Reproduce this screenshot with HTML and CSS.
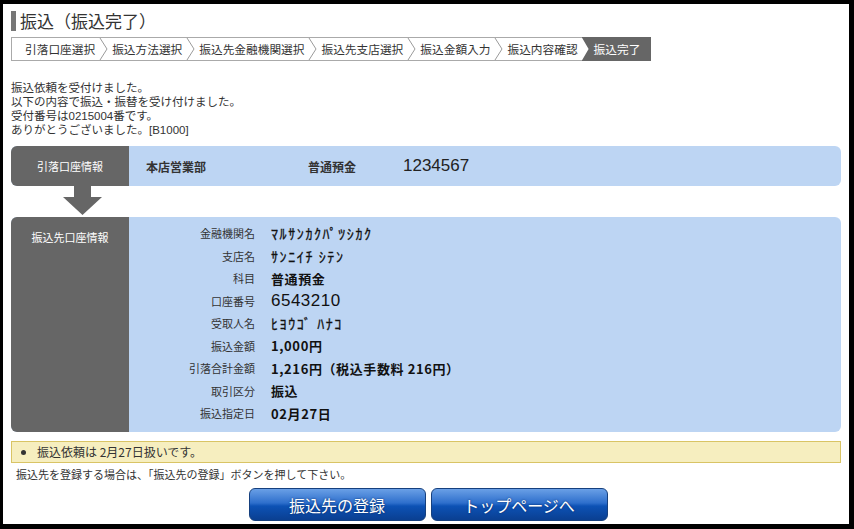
FILE: index.html
```html
<!DOCTYPE html>
<html lang="ja">
<head>
    <meta charset="UTF-8">
    <title>振込（振込完了）</title>
    <link rel="stylesheet" href="styles.css">
</head>
<body>
    <div class="page">
        <h1 class="page-title">振込（振込完了）</h1>

        <div class="crumbs">
            <span class="crumb first">引落口座選択</span>
            <svg class="chev" width="9" height="22" viewBox="0 0 9 22"><polyline points="1,0 8,11 1,22" fill="none" stroke="#9a9a9a" stroke-width="1"/></svg>
            <span class="crumb">振込方法選択</span>
            <svg class="chev" width="9" height="22" viewBox="0 0 9 22"><polyline points="1,0 8,11 1,22" fill="none" stroke="#9a9a9a" stroke-width="1"/></svg>
            <span class="crumb">振込先金融機関選択</span>
            <svg class="chev" width="9" height="22" viewBox="0 0 9 22"><polyline points="1,0 8,11 1,22" fill="none" stroke="#9a9a9a" stroke-width="1"/></svg>
            <span class="crumb">振込先支店選択</span>
            <svg class="chev" width="9" height="22" viewBox="0 0 9 22"><polyline points="1,0 8,11 1,22" fill="none" stroke="#9a9a9a" stroke-width="1"/></svg>
            <span class="crumb">振込金額入力</span>
            <svg class="chev" width="9" height="22" viewBox="0 0 9 22"><polyline points="1,0 8,11 1,22" fill="none" stroke="#9a9a9a" stroke-width="1"/></svg>
            <span class="crumb">振込内容確認</span>
            <span class="crumb current">振込完了</span>
        </div>

        <div class="message">
            <div>振込依頼を受付けました。</div>
            <div>以下の内容で振込・振替を受け付けました。</div>
            <div>受付番号は0215004番です。</div>
            <div>ありがとうございました。[B1000]</div>
        </div>

        <div class="info-box from-box">
            <div class="info-label">引落口座情報</div>
            <div class="info-body from-body">
                <span class="from-branch">本店営業部</span>
                <span class="from-type">普通預金</span>
                <span class="from-number">1234567</span>
            </div>
        </div>

        <div class="flow-arrow">
            <svg width="40" height="31" viewBox="0 0 40 31"><polygon points="11,0 28,0 28,11 39,11 19.5,29 0,11 11,11" fill="#666"/></svg>
        </div>

        <div class="info-box to-box">
            <div class="info-label top">振込先口座情報</div>
            <div class="info-body">
                <div class="to-row"><span class="to-key">金融機関名</span><span class="to-val kana">ﾏﾙｻﾝｶｸﾊﾟﾂｼｶｸ</span></div>
                <div class="to-row"><span class="to-key">支店名</span><span class="to-val kana">ｻﾝﾆｲﾁ ｼﾃﾝ</span></div>
                <div class="to-row"><span class="to-key">科目</span><span class="to-val">普通預金</span></div>
                <div class="to-row"><span class="to-key">口座番号</span><span class="to-val big">6543210</span></div>
                <div class="to-row"><span class="to-key">受取人名</span><span class="to-val kana">ﾋﾖｳｺﾞ ﾊﾅｺ</span></div>
                <div class="to-row"><span class="to-key">振込金額</span><span class="to-val">1,000円</span></div>
                <div class="to-row"><span class="to-key">引落合計金額</span><span class="to-val">1,216円（税込手数料 216円）</span></div>
                <div class="to-row"><span class="to-key">取引区分</span><span class="to-val">振込</span></div>
                <div class="to-row"><span class="to-key">振込指定日</span><span class="to-val">02月27日</span></div>
            </div>
        </div>

        <div class="notice">
            <ul><li>振込依頼は 2月27日扱いです。</li></ul>
        </div>

        <p class="hint">振込先を登録する場合は、「振込先の登録」ボタンを押して下さい。</p>

        <div class="actions">
            <button class="btn-blue">振込先の登録</button>
            <button class="btn-blue">トップページへ</button>
        </div>
    </div>
</body>
</html>
```

FILE: styles.css
```css
html, body { margin: 0; padding: 0; background: #000; }
body { font-family: "Noto Sans CJK JP", "DejaVu Sans", sans-serif; color: #333; font-size: 12px; }
.page { background: #fff; width: 830px; height: 520px; margin: 4px 0 0 3px; padding: 0 8px; overflow: hidden; }

.page-title { margin: 0; padding: 0 0 0 4px; border-left: 5px solid #777; font-size: 17px; font-weight: normal; line-height: 20px; position: relative; top: 7px; height: 20px; }

.crumbs { display: flex; align-items: stretch; margin-top: 13px; width: 639px; height: 22px; border: 1px solid #aaa; border-right: none; font-size: 11.7px; line-height: 22px; color: #333; }
.crumb { padding: 0 4px; white-space: nowrap; }
.crumb.first { padding-left: 13px; }
.chev { flex: none; display: block; }
.crumb.current { padding: 0 5px 0 12px; background: #666; color: #fff; flex-grow: 1; clip-path: polygon(0 0, 100% 0, 100% 100%, 0 100%, 7px 50%); margin-top: -1px; margin-bottom: -1px; line-height: 24px; }

.message { margin-top: 20px; font-family: "Liberation Sans", "Noto Sans CJK JP", sans-serif; font-size: 11.5px; line-height: 14px; }
.message div { height: 14px; }

.info-box { display: flex; border-radius: 6px; background: #bdd5f3; }
.from-box { margin-top: 9px; height: 40px; }
.info-label { flex: none; width: 118px; background: #666; color: #fff; font-size: 11px; border-radius: 6px 0 0 6px; display: flex; align-items: center; justify-content: center; }
.info-label.top { align-items: flex-start; padding-top: 12px; box-sizing: border-box; }
.info-body { flex-grow: 1; }
.from-body { display: flex; align-items: center; padding-left: 17px; font-weight: bold; }
.from-branch { width: 162px; }
.from-type { width: 95px; }
.from-number { font-size: 17px; font-weight: normal; font-family: "Liberation Sans", sans-serif; color: #222; }

.flow-arrow { height: 31px; padding-left: 52px; }
.flow-arrow svg { display: block; }

.to-box { height: 215px; }
.to-box .info-body { padding-top: 5px; }
.to-row { display: flex; align-items: center; height: 22.5px; }
.to-key { width: 126px; text-align: right; font-size: 11px; padding-right: 8px; }
.to-val { padding-left: 8px; font-weight: bold; font-size: 13px; letter-spacing: 0.6px; color: #111; }
.to-val.kana { font-size: 14px; letter-spacing: 1.6px; font-weight: normal; -webkit-text-stroke: 0.3px #111; }
.to-val.big { font-size: 17px; font-weight: normal; letter-spacing: 0.5px; font-family: "Liberation Sans", sans-serif; }

.notice { margin-top: 9px; height: 20px; background: #f6eebf; border: 1px solid #d9c465; font-size: 12px; line-height: 20px; }
.notice ul { margin: 0; padding-left: 25px; }

.hint { margin: 4px 0 0 5px; font-size: 11px; line-height: 14px; }

.actions { display: flex; justify-content: center; gap: 5px; margin-top: 7px; padding-left: 4px; }
.btn-blue { width: 177px; height: 33px; padding: 0; border: 1px solid #16407e; border-radius: 6px; background: linear-gradient(#6aa0e6, #2e6fcc 45%, #0d52b5 55%, #0a3f91); color: #fff; font-family: "Noto Sans CJK JP", sans-serif; font-size: 16px; text-shadow: 0 0 2px #0a2a60; cursor: pointer; }
```
